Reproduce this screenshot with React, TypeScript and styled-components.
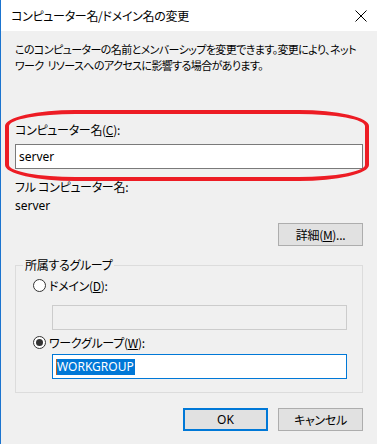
import styled, { createGlobalStyle } from "styled-components";

const GlobalStyle = createGlobalStyle`
  html, body {
    margin: 0;
    padding: 0;
    background: #f0f0f0;
  }
  body {
    font-family: "Noto Sans CJK JP", "Noto Sans", sans-serif;
    font-size: 12px;
    font-feature-settings: "palt";
    letter-spacing: -0.3px;
    color: #000;
  }
`;

export default function App() {
  return (
    <>
      <GlobalStyle />
      <Window>
        <TitleBar>
          <Title>コンピューター名/ドメイン名の変更</Title>
          <CloseIcon width="12" height="12" viewBox="0 0 12 12">
            <path d="M0.5 0.5 L11.5 11.5 M11.5 0.5 L0.5 11.5" stroke="#000" strokeWidth="1" />
          </CloseIcon>
        </TitleBar>
        <Body>
          <Description>
            このコンピューターの名前とメンバーシップを変更できます。変更により、ネット
            <br />
            ワーク&nbsp;&nbsp;リソースへのアクセスに影響する場合があります。
          </Description>
          <Highlighted>
            <Label>
              コンピューター名(<u>C</u>):
            </Label>
            <TextBox>
              <Latin>server</Latin>
            </TextBox>
            <RedMark />
          </Highlighted>
          <Label $top={11}>フル&nbsp;コンピューター名:</Label>
          <Label $top={4}>
            <Latin>server</Latin>
          </Label>
          <ButtonRow $top={10}>
            <Button>
              詳細(<u>M</u>)...
            </Button>
          </ButtonRow>
          <Group>
            <Legend>所属するグループ</Legend>
            <RadioRow $top={5}>
              <Radio />
              <span>
                ドメイン(<u>D</u>):
              </span>
            </RadioRow>
            <TextBox $indent $disabled $top={12} />
            <RadioRow $top={4}>
              <Radio $checked />
              <span>
                ワークグループ(<u>W</u>):
              </span>
            </RadioRow>
            <TextBox $indent $focused $top={4}>
              <Caret />
              <Selection>WORKGROUP</Selection>
            </TextBox>
          </Group>
          <ButtonRow $top={15}>
            <Button $default>
              <Latin>OK</Latin>
            </Button>
            <Button>キャンセル</Button>
          </ButtonRow>
        </Body>
      </Window>
    </>
  );
}

const Window = styled.div`
  display: flex;
  flex-direction: column;
  width: 377px;
  height: 444px;
  box-sizing: border-box;
  border-left: 1px solid #1b74cf;
  background: #f0f0f0;
  overflow: hidden;
`;
const TitleBar = styled.div`
  display: flex;
  align-items: center;
  justify-content: space-between;
  height: 31px;
  flex: none;
  padding: 0 10px 0 10px;
  background: #fff;
`;
const Title = styled.div`
  font-size: 12px;
  line-height: 14px;
  margin-top: 1px;
`;
const CloseIcon = styled.svg`
  display: block;
  margin-top: 1px;
`;
const Body = styled.div`
  display: flex;
  flex-direction: column;
  padding: 0 14px;
`;
const Description = styled.div`
  margin-top: 10px;
  font-size: 11px;
  line-height: 16px;
  white-space: nowrap;
  letter-spacing: -0.6px;
`;
const Highlighted = styled.div`
  position: relative;
  display: flex;
  flex-direction: column;
  margin-top: 50px;
`;
const RedMark = styled.div`
  position: absolute;
  top: -13px;
  left: -10px;
  right: -6px;
  bottom: -12px;
  border: 4px solid #ed1c24;
  border-radius: 70px / 16px;
  pointer-events: none;
  z-index: 2;
`;
const Label = styled.div<{ $top?: number }>`
  line-height: 14px;
  margin-top: ${(p) => p.$top ?? 0}px;
`;
const Latin = styled.span`
  font-family: "Noto Sans", "Noto Sans CJK JP", sans-serif;
  letter-spacing: 0;
`;
const TextBox = styled.div<{
  $top?: number;
  $indent?: boolean;
  $disabled?: boolean;
  $focused?: boolean;
}>`
  display: flex;
  align-items: center;
  height: 25px;
  box-sizing: border-box;
  margin-top: ${(p) => p.$top ?? 7}px;
  margin-left: ${(p) => (p.$indent ? 19 : 0)}px;
  padding: 0 3px;
  background: ${(p) => (p.$disabled ? "#f0f0f0" : "#fff")};
  border: 1px solid
    ${(p) => (p.$focused ? "#0078d7" : p.$disabled ? "#cccccc" : "#7a7a7a")};
`;
const Caret = styled.span`
  width: 1px;
  height: 16px;
  background: #c06020;
`;
const Selection = styled.span`
  font-family: "Noto Sans", sans-serif;
  letter-spacing: 0;
  background: #0078d7;
  color: #fff;
  line-height: 16px;
  padding-right: 1px;
`;
const ButtonRow = styled.div<{ $top: number }>`
  display: flex;
  justify-content: flex-end;
  gap: 10px;
  margin-top: ${(p) => p.$top}px;
`;
const Button = styled.div<{ $default?: boolean }>`
  display: flex;
  align-items: center;
  justify-content: center;
  width: 85px;
  height: 23px;
  box-sizing: border-box;
  background: #e1e1e1;
  border: ${(p) => (p.$default ? "2px solid #0078d7" : "1px solid #adadad")};
`;
const Group = styled.fieldset`
  margin: 12px 0 0 0;
  padding: 0 15px 13px 17px;
  border: 1px solid #dcdcdc;
  display: flex;
  flex-direction: column;
  min-width: 0;
`;
const Legend = styled.legend`
  padding: 0 2px;
  margin-left: -10px;
  line-height: 14px;
`;
const RadioRow = styled.div<{ $top: number }>`
  display: flex;
  align-items: center;
  gap: 3px;
  height: 16px;
  margin-top: ${(p) => p.$top}px;
`;
const Radio = styled.span<{ $checked?: boolean }>`
  position: relative;
  width: 13px;
  height: 13px;
  box-sizing: border-box;
  border-radius: 50%;
  border: 1px solid #333;
  background: #fff;
  &::after {
    content: "";
    display: ${(p) => (p.$checked ? "block" : "none")};
    position: absolute;
    top: 2px;
    left: 2px;
    width: 7px;
    height: 7px;
    border-radius: 50%;
    background: #333;
  }
`;
